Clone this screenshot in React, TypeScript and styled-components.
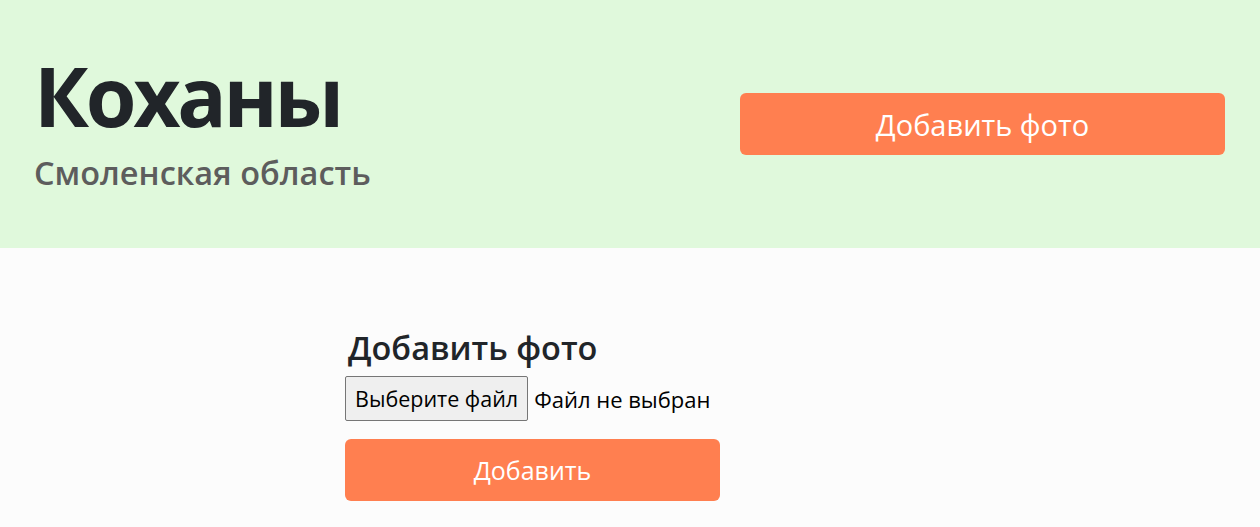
import styled, { createGlobalStyle } from "styled-components";

const GlobalStyle = createGlobalStyle`
  html, body {
    margin: 0;
    padding: 0;
    background-color: #fcfcfc;
    font-family: "Open Sans", "Noto Sans", sans-serif;
    color: #212529;
  }
`;

const Header = styled.header`
  background-color: #e0f9dc;
  height: 248px;
  box-sizing: border-box;
  padding: 0 35px 0 34px;
  display: flex;
  align-items: center;
  justify-content: space-between;
`;

const TitleArea = styled.div`
  display: flex;
  flex-direction: column;
`;

const Title = styled.h1`
  margin: 0;
  font-size: 82px;
  font-weight: 700;
  line-height: 1;
  letter-spacing: -3.3px;
`;

const Subtitle = styled.div`
  font-size: 32.5px;
  font-weight: 600;
  color: #5d5d5d;
  margin-top: 14px;
`;

const Button = styled.button<{ $large?: boolean }>`
  width: ${(p) => (p.$large ? 485 : 375)}px;
  height: 62px;
  border: none;
  border-radius: 6px;
  background-color: #ff7f50;
  color: #fff;
  font-family: inherit;
  font-size: ${(p) => (p.$large ? 29 : 25)}px;
  cursor: pointer;
`;

const Main = styled.main`
  padding: 80px 0 0 345px;
`;

const Form = styled.form`
  width: 375px;
  display: flex;
  flex-direction: column;
`;

const FormTitle = styled.h3`
  margin: 0 0 8px 3px;
  font-size: 32.5px;
  font-weight: 600;
  line-height: 40px;
`;

const FileRow = styled.div`
  display: flex;
  align-items: center;
  margin-bottom: 18px;
`;

const FileButton = styled.label`
  height: 45px;
  box-sizing: border-box;
  padding: 0 9px;
  display: flex;
  align-items: center;
  background-color: #efefef;
  border: 1px solid #767676;
  border-radius: 2px;
  font-size: 21.5px;
  color: #000;
  white-space: nowrap;
`;

const FileStatus = styled.span`
  margin-left: 6px;
  font-size: 22px;
  color: #000;
  white-space: nowrap;
`;

const HiddenInput = styled.input`
  display: none;
`;

export default function App() {
  return (
    <>
      <GlobalStyle />
      <Header>
        <TitleArea>
          <Title>Коханы</Title>
          <Subtitle>Смоленская область</Subtitle>
        </TitleArea>
        <Button $large>Добавить фото</Button>
      </Header>
      <Main>
        <Form onSubmit={(e) => e.preventDefault()}>
          <FormTitle>Добавить фото</FormTitle>
          <FileRow>
            <FileButton>
              Выберите файл
              <HiddenInput type="file" />
            </FileButton>
            <FileStatus>Файл не выбран</FileStatus>
          </FileRow>
          <Button type="submit">Добавить</Button>
        </Form>
      </Main>
    </>
  );
}
